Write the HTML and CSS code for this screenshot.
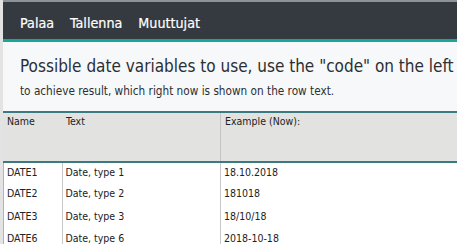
FILE: index.html
```html
<!DOCTYPE html>
<html lang="fi">
<head>
    <meta charset="UTF-8">
    <title>Muuttujat</title>
    <link rel="stylesheet" href="styles.css">
</head>
<body>
    <div class="frame">
        <!-- Top navigation -->
        <nav class="navbar">
            <a class="nav-link" href="#">Palaa</a>
            <a class="nav-link" href="#">Tallenna</a>
            <a class="nav-link" href="#">Muuttujat</a>
        </nav>

        <!-- Intro text -->
        <div class="intro">
            <div class="intro-title">Possible date variables to use, use the "code" on the left</div>
            <div class="intro-sub">to achieve result, which right now is shown on the row text.</div>
        </div>

        <!-- Variable table -->
        <table class="var-table">
            <thead>
                <tr>
                    <th class="col-name">Name</th>
                    <th class="col-text">Text</th>
                    <th class="col-example">Example (Now):</th>
                </tr>
            </thead>
            <tbody>
                <tr><td>DATE1</td><td>Date, type 1</td><td>18.10.2018</td></tr>
                <tr><td>DATE2</td><td>Date, type 2</td><td>181018</td></tr>
                <tr><td>DATE3</td><td>Date, type 3</td><td>18/10/18</td></tr>
                <tr><td>DATE6</td><td>Date, type 6</td><td>2018-10-18</td></tr>
            </tbody>
        </table>
    </div>
</body>
</html>
```

FILE: styles.css
```css
body {
    margin: 0;
    background: #fff;
    font-family: "DejaVu Sans", sans-serif;
    font-stretch: condensed;
    color: #222;
    overflow: hidden;
}
.frame {
    width: 454px;
    border-left: 3px solid #e3e3e3;
    box-shadow: inset 1px 0 0 #b4b4b4;
    min-height: 244px;
}
.navbar {
    background: #343a40;
    border-top: 2px solid #8d9296;
    border-bottom: 3px solid #17a697;
    height: 33px;
    display: flex;
    align-items: center;
    gap: 16px;
    padding: 4px 0 0 17px;
}
.nav-link {
    color: #fff;
    text-decoration: none;
    font-size: 14.2px;
    font-weight: 500;
    -webkit-text-stroke: 0.2px #fff;
}
.intro {
    background: #f7f8fa;
    padding: 12px 0 0 17px;
    height: 57px;
}
.intro-title {
    font-size: 17px;
    color: #2b2f33;
    line-height: 24px;
}
.intro-sub {
    font-size: 11.7px;
    color: #2b2f33;
    margin-top: 6px;
}
.var-table {
    width: 454px;
    border-collapse: collapse;
    font-size: 10.5px;
    color: #222;
}
.var-table thead tr {
    background: #e2e2e0;
    border-top: 2px solid #3a7a80;
    border-bottom: 2px solid #3a7a80;
    height: 50px;
}
.var-table th {
    font-weight: normal;
    text-align: left;
    vertical-align: top;
    padding: 2px 4px;
    line-height: 13px;
}
.col-name {
    width: 51px;
}
.col-text {
    width: 150px;
}
.col-example {
    border-left: 1px solid #c4c4c4;
}
.var-table tbody tr {
    height: 22.4px;
}
.var-table td {
    padding: 3px 4px 0 3px;
    line-height: 13px;
    vertical-align: top;
    border-left: 1px solid #c8c8c8;
}
.var-table td:first-child {
    border-left: none;
    padding-left: 4px;
}
```
